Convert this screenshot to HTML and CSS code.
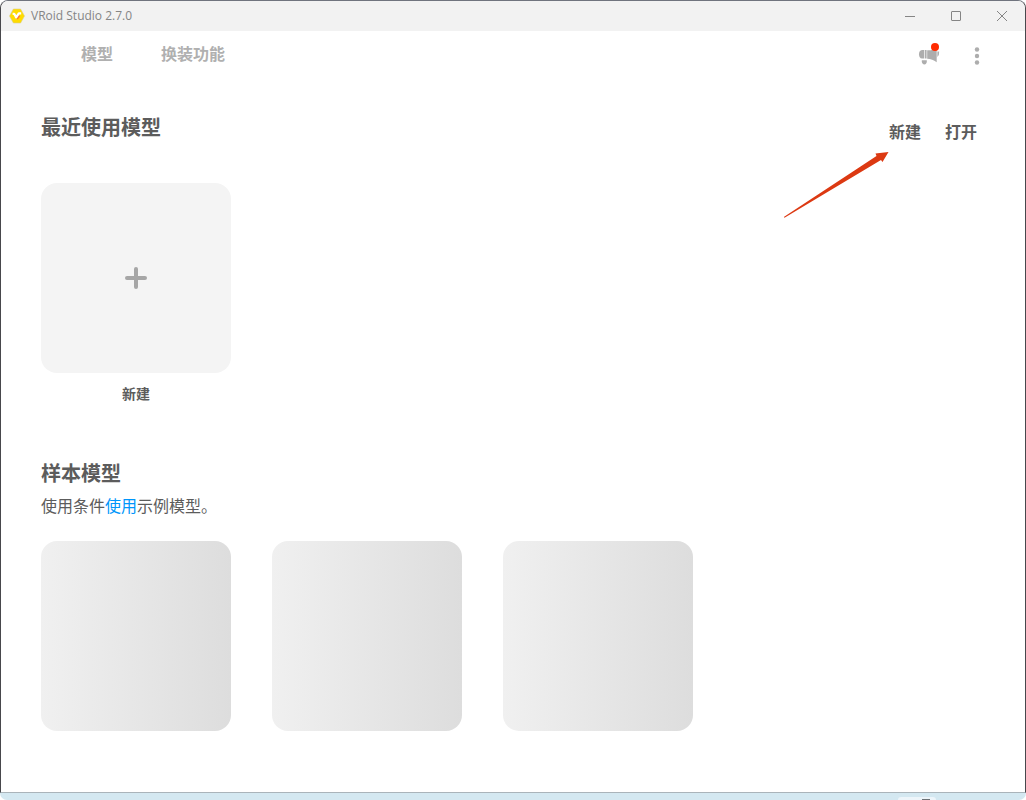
FILE: index.html
```html
<!DOCTYPE html>
<html lang="zh-CN">

<head>
    <meta charset="UTF-8">
    <meta name="viewport" content="width=device-width, initial-scale=1.0">
    <title>VRoid Studio 2.7.0</title>
    <link rel="stylesheet" href="styles.css">
</head>

<body>
    <div class="window">
        <header class="titlebar">
            <svg class="logo" width="16" height="16" viewBox="0 0 16 16">
                <path d="M4.4 1h7.2L15.5 8l-3.9 7H4.4L.5 8z" fill="#ffdc00" stroke="#d9cf8a" stroke-width=".6" stroke-linejoin="round"/>
                <path d="M7.800 10.800l2.600-3.200" fill="none" stroke="#ff7a2f" stroke-width="2.200"/>
                <path d="M3.600 5.800h1.600l2 3.600 2.600-4h2.400" fill="none" stroke="#fff" stroke-width="2.200" stroke-linejoin="round"/>
            </svg>
            <span class="app-name">VRoid Studio 2.7.0</span>
            <div class="window-controls">
                <button type="button" aria-label="最小化">
                    <svg width="12" height="12" viewBox="0 0 12 12"><path d="M1 6.5h10"/></svg>
                </button>
                <button type="button" aria-label="最大化">
                    <svg width="12" height="12" viewBox="0 0 12 12"><rect x="1.5" y="1.5" width="9" height="9" rx=".5"/></svg>
                </button>
                <button type="button" aria-label="关闭">
                    <svg width="12" height="12" viewBox="0 0 12 12"><path d="M1 1l10 10M11 1L1 11"/></svg>
                </button>
            </div>
        </header>

        <nav class="nav">
            <a href="#models">模型</a>
            <a href="#dressing">换装功能</a>
            <div class="nav-icons">
                <button type="button" class="icon-button" aria-label="通知">
                    <svg width="22" height="20" viewBox="0 0 22 20" fill="#adadad">
                        <path d="M6.300 4v8.600H4Q1 12.300 1 8.300T4 4z"/>
                        <path d="M7 4h1.600v8.600H7z"/>
                        <path d="M9.200 4.300c3.500.3 6.500-.5 9.500-2.300V16.200c-3-2.300-6-3.300-9.500-3.500z"/>
                        <path d="M19.400 5.500h1.800q.2 3.500-1.800 5.500z"/>
                        <path d="M3.800 14.300h5v1.700c-.4 1.500-1 2.400-2.400 2.400S4.200 17.500 3.800 16z"/>
                    </svg>
                    <span class="badge"></span>
                </button>
                <button type="button" class="icon-button more" aria-label="更多">
                    <svg width="6" height="18" viewBox="0 0 6 18" fill="#adadad">
                        <circle cx="3" cy="2.500" r="2.200"/>
                        <circle cx="3" cy="9" r="2.200"/>
                        <circle cx="3" cy="15.500" r="2.200"/>
                    </svg>
                </button>
            </div>
        </nav>

        <main class="content">
            <section class="recent" id="models">
                <div class="section-head">
                    <h2>最近使用模型</h2>
                    <div class="actions">
                        <button type="button">新建</button>
                        <button type="button">打开</button>
                        <svg class="arrow" width="106" height="68" viewBox="0 0 106 68">
                            <path d="M1.500 66.800L.800 66 93.500 5 92.500 2.500 105.500 1 99.500 11 98 9z" fill="#dc3912"/>
                        </svg>
                    </div>
                </div>
                <button type="button" class="new-model">
                    <span class="card card-new">
                        <svg width="22" height="22" viewBox="0 0 22 22"><path d="M11 2v18M2 11h18"/></svg>
                    </span>
                    <span class="card-label">新建</span>
                </button>
            </section>

            <section class="samples">
                <h2>样本模型</h2>
                <p>使用条件<a href="#terms">使用</a>示例模型。</p>
                <div class="card-list">
                    <div class="card card-sample"></div>
                    <div class="card card-sample"></div>
                    <div class="card card-sample"></div>
                </div>
            </section>
        </main>
    </div>
    <footer class="taskbar"><span class="task"></span></footer>
</body>

</html>
```
FILE: styles.css
```css
* {
    box-sizing: border-box;
}
body {
    display: flex;
    flex-direction: column;
    min-height: 100vh;
    margin: 0;
    background: #fff;
    color: #5c5c5c;
    font-family: "Noto Sans CJK SC", sans-serif;
    font-size: 16px;
    line-height: 24px;
}
h2, p {
    margin: 0;
}
h2 {
    font-size: 20px;
    font-weight: 700;
    line-height: 30px;
}
a {
    text-decoration: none;
}
button {
    padding: 0;
    border: 0;
    background: none;
    color: inherit;
    font: inherit;
    cursor: pointer;
}
svg {
    display: block;
}

/* 窗口 */
.window {
    flex: 1;
    border: 1px solid #48484c;
    border-top-color: #70747e;
    border-bottom-color: #aab4ba;
    border-radius: 8px 8px 0 0;
    overflow: hidden;
}
.titlebar {
    display: flex;
    align-items: center;
    height: 30px;
    padding-left: 8px;
    background: #f2f2f2;
}
.app-name {
    margin-left: 6px;
    color: #858585;
    font-family: "Open Sans", sans-serif;
    font-size: 12px;
}
.window-controls {
    display: flex;
    margin-left: auto;
}
.window-controls button {
    display: flex;
    align-items: center;
    justify-content: center;
    width: 46px;
    height: 30px;
}
.window-controls svg {
    fill: none;
    stroke: #858585;
}

/* 导航 */
.nav {
    display: flex;
    align-items: flex-start;
    gap: 48px;
    height: 48px;
    padding: 10px 40px 0 80px;
}
.nav a {
    color: #b0b0b0;
    font-weight: 700;
}
.nav-icons {
    display: flex;
    align-items: center;
    gap: 34px;
    margin-left: auto;
    padding-top: 5px;
}
.icon-button {
    position: relative;
}
.more {
    padding: 0 5px 0 0;
}
.badge {
    position: absolute;
    top: -3px;
    right: 1px;
    width: 8px;
    height: 8px;
    border-radius: 50%;
    background: #ff2b00;
}

/* 内容 */
.content {
    padding: 33px 48px 60px 40px;
}
.section-head {
    display: flex;
    justify-content: space-between;
    height: 71px;
}
.actions {
    display: flex;
    position: relative;
    align-items: flex-start;
    gap: 24px;
    padding-top: 7px;
    font-weight: 700;
}
.arrow {
    position: absolute;
    top: 39px;
    right: 88px;
}
.card {
    width: 190px;
    height: 190px;
    border-radius: 16px;
}
.new-model {
    display: block;
}
.card-new {
    display: flex;
    align-items: center;
    justify-content: center;
    background: #f4f4f4;
}
.card-new svg {
    fill: none;
    stroke: #a6a6a6;
    stroke-width: 4;
    stroke-linecap: round;
}
.card-label {
    display: block;
    margin-top: 9px;
    font-size: 14px;
    font-weight: 700;
    line-height: 22px;
}
.samples {
    padding-top: 54px;
}
.samples p {
    margin-top: 5px;
}
.samples a {
    color: #0096fa;
}
.card-list {
    display: flex;
    flex-wrap: wrap;
    gap: 41px;
    margin-top: 24px;
}
.card-sample {
    background: linear-gradient(to right, #f0f0f0, #dddddd);
}

/* 任务栏 */
.taskbar {
    display: flex;
    justify-content: flex-end;
    height: 7px;
    padding: 4px 90px 0 0;
    border-radius: 0 0 8px 8px;
    background: #d4e8f1;
}
.task {
    display: flex;
    justify-content: center;
    width: 38px;
    padding: 2px 0 0 18px;
    border-radius: 4px 4px 0 0;
    background: #edf5fa;
}
.task::after {
    width: 8px;
    height: 1px;
    background: #6d7276;
    content: "";
}
```
